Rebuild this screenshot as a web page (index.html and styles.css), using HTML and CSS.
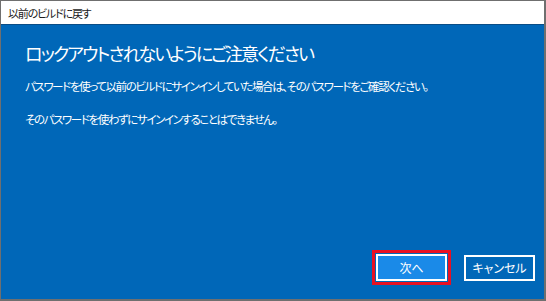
FILE: index.html
```html
<!DOCTYPE html>
<html>
<head>
  <title>以前のビルドに戻す</title>
  <link rel="stylesheet" href="styles.css">
</head>
<body>

<div class="window">
  <!-- Title bar -->
  <div class="titlebar">以前のビルドに戻す</div>

  <!-- Main content -->
  <div class="content">
    <h1>ロックアウトされないようにご注意ください</h1>
    <p>パスワードを使って以前のビルドにサインインしていた場合は、そのパスワードをご確認ください。</p>
    <p>そのパスワードを使わずにサインインすることはできません。</p>

    <div class="actions">
      <span class="highlight">
        <button class="btn primary">次へ</button>
      </span>
      <button class="btn">キャンセル</button>
    </div>
  </div>
</div>

</body>
</html>
```

FILE: styles.css
```css
body {
  margin: 0;
  font-family: "Noto Sans CJK JP", "Noto Sans", sans-serif;
  font-feature-settings: "palt";
  background-color: #6f6f6f;
}
.window {
  height: 298px;
  margin: 1px 2px 2px 1px;
  display: flex;
  flex-direction: column;
}
.titlebar {
  height: 23px;
  background-color: #FFF;
  border-bottom: 1px solid #0a4d86;
  color: #1a1a1a;
  font-size: 11px;
  line-height: 24px;
  padding-left: 7px;
  letter-spacing: -1.2px;
}
.content {
  flex: 1;
  background-color: #0067b8;
  color: #FFF;
  padding: 15px 9px 14px 24px;
  display: flex;
  flex-direction: column;
}
h1 {
  font-size: 18px;
  font-weight: normal;
  margin: 0 0 12px 0;
  line-height: 26px;
  letter-spacing: -1.9px;
}
p {
  font-size: 11.5px;
  margin: 0 0 17px 0;
  line-height: 16px;
  letter-spacing: -1.4px;
}
.actions {
  margin-top: auto;
  display: flex;
  justify-content: flex-end;
  align-items: center;
  gap: 13px;
}
.highlight {
  display: flex;
  border: 3px solid #e81123;
  padding: 1px;
}
.btn {
  width: 71px;
  height: 26px;
  border: 2px solid #FFF;
  background-color: #0067b8;
  color: #FFF;
  font-family: inherit;
  font-feature-settings: "palt";
  font-size: 12px;
  padding: 0;
}
.btn.primary {
  background-color: #1a8ae8;
  height: 27px;
}
```
